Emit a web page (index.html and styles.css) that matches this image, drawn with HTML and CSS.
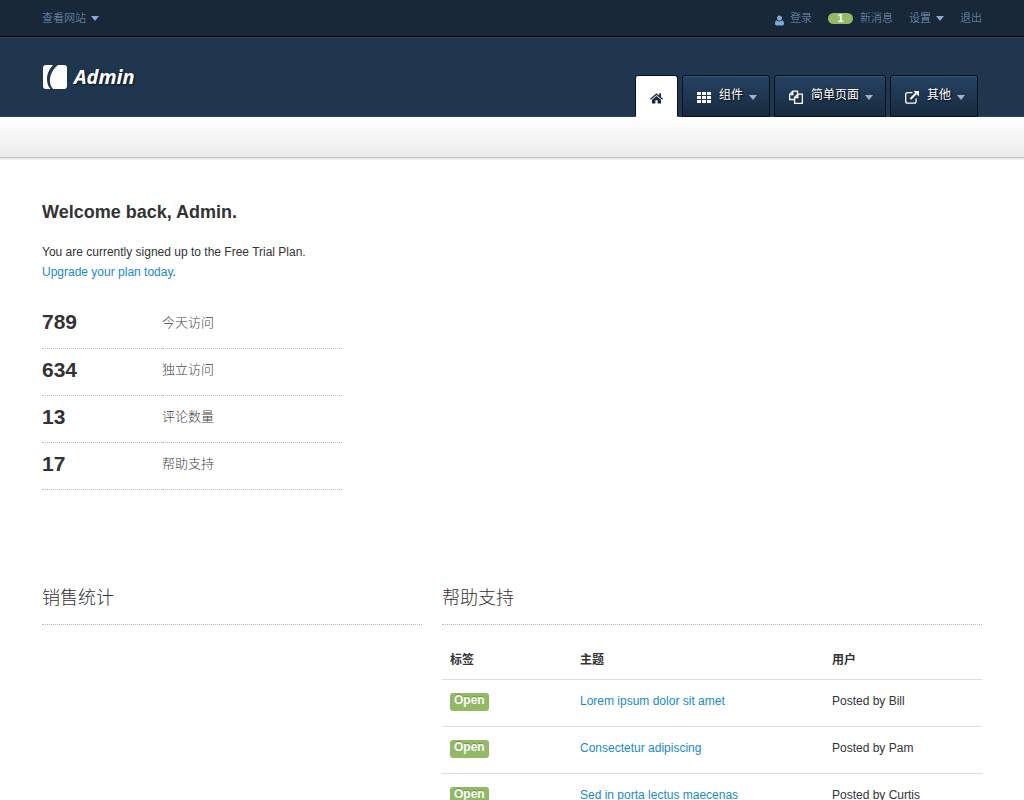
FILE: index.html
```html
<!DOCTYPE html>
<html lang="zh-CN">
<head>
<meta charset="utf-8">
<title>Admin</title>
<link rel="stylesheet" href="styles.css">
</head>
<body>
<div class="topbar">
  <div class="container topbar-inner">
    <a class="top-link" href="#">查看网站<span class="caret"></span></a>
    <nav class="top-nav">
      <a class="top-link" href="#"><svg class="user-icon" viewBox="0 0 9 11" width="9" height="11"><path d="M4.500 0.500C6 .5 7 1.600 7 3S6 5.700 4.500 5.700 2 4.400 2 3 3 .5 4.500.5zM1.700 5.300C2.400 6.200 3.300 6.400 4.500 6.400S6.600 6.200 7.300 5.300C8.500 5.800 9 7 9 8.600 9 9.700 8.500 10.500 7.500 10.500H1.500C.5 10.500 0 9.700 0 8.600 0 7 .5 5.800 1.700 5.300z"/></svg>登录</a>
      <a class="top-link" href="#"><span class="count">1</span>新消息</a>
      <a class="top-link" href="#">设置<span class="caret"></span></a>
      <a class="top-link" href="#">退出</a>
    </nav>
  </div>
</div>
<header class="header">
  <div class="container header-inner">
    <a class="brand" href="#"><svg viewBox="0 0 24 24" width="24" height="24"><path d="M3 0H10C5.500 5 3.500 10 4 15 4.300 19 5.500 22 7.500 24H3Q0 24 0 21V3Q0 0 3 0z"/><path d="M15 0H21Q24 0 24 3V21Q24 24 21 24H10C7.500 21 6.500 18 7 14 7.500 9 10 4 15 0z"/></svg>Admin</a>
    <nav class="tabs">
      <a class="tab tab-active" href="#" aria-label="首页"><svg class="home-icon" viewBox="0 0 13 12" width="13" height="12"><path d="M6.500 1.200 0 6.800.8 7.800 6.500 3 12.200 7.800 13 6.800 11 5.100V1.200H9.200V3.500z"/><path d="M6.500 4 2 7.800V11.500H5.400V8.300H7.600V11.500H11V7.800z"/></svg></a>
      <a class="tab" href="#"><svg class="tab-icon" viewBox="0 0 14 14" width="14" height="14"><path d="M0 2h4v3H0zM5 2h4v3H5zM10 2h4v3h-4zM0 6h4v3H0zM5 6h4v3H5zM10 6h4v3h-4zM0 10h4v3H0zM5 10h4v3H5zM10 10h4v3h-4z"/></svg>组件<span class="caret"></span></a>
      <a class="tab" href="#"><svg class="tab-icon line-icon" viewBox="0 0 14 14" width="14" height="14"><path d="M5 9.500H.6V4.500L3.800 1.100H8.500V4M3.800 1.200V4.500H.7M5.600 7.500 8.800 4.100H13.400V13.400H5.600zM8.800 4.200V7.500H5.700"/></svg>简单页面<span class="caret"></span></a>
      <a class="tab" href="#"><svg class="tab-icon line-icon" viewBox="0 0 14 14" width="14" height="14"><path d="M7.500 2.700H2.600Q.7 2.700.7 4.600V11.200Q.7 13.100 2.600 13.100H9.200Q11.100 13.100 11.100 11.200V8.500"/><path class="arrow-line" d="M5.500 9 11 3.500"/><path class="arrow-head" d="M8.500 1H14V6.500z"/></svg>其他<span class="caret"></span></a>
    </nav>
  </div>
</header>
<div class="subbar"></div>
<main class="container">
  <section class="welcome">
    <h1>Welcome back, Admin.</h1>
    <p>You are currently signed up to the Free Trial Plan.<br><a href="#">Upgrade your plan today</a>.</p>
    <table class="stats">
      <tbody>
        <tr><th scope="row">789</th><td>今天访问</td></tr>
        <tr><th scope="row">634</th><td>独立访问</td></tr>
        <tr><th scope="row">13</th><td>评论数量</td></tr>
        <tr><th scope="row">17</th><td>帮助支持</td></tr>
      </tbody>
    </table>
  </section>
  <div class="columns">
    <section><h2>销售统计</h2></section>
    <section>
      <h2>帮助支持</h2>
      <table class="tickets">
        <thead><tr><th class="col-label">标签</th><th class="col-subject">主题</th><th>用户</th></tr></thead>
        <tbody>
          <tr><td><span class="label">Open</span></td><td><a href="#">Lorem ipsum dolor sit amet</a></td><td>Posted by Bill</td></tr>
          <tr><td><span class="label">Open</span></td><td><a href="#">Consectetur adipiscing</a></td><td>Posted by Pam</td></tr>
          <tr><td><span class="label">Open</span></td><td><a href="#">Sed in porta lectus maecenas</a></td><td>Posted by Curtis</td></tr>
        </tbody>
      </table>
    </section>
  </div>
</main>
</body>
</html>
```
FILE: styles.css
```css
* { box-sizing: border-box; }
body {
  margin: 0;
  background: #fff;
  color: #333;
  font: 12px/20px "Liberation Sans", "Noto Sans CJK SC", sans-serif;
}
a { color: #178acb; text-decoration: none; }
.container { max-width: 940px; margin: 0 auto; }

.topbar { height: 37px; background: #182839; border-bottom: 1px solid #000; }
.topbar-inner { display: flex; justify-content: space-between; padding-top: 8px; }
.top-nav { display: flex; gap: 16px; }
.top-link { display: flex; align-items: center; color: #7899be; font-size: 11px; font-weight: 300; }
.caret {
  margin-left: 5px;
  border: 4px solid transparent;
  border-top: 5px solid #80aad8;
  border-bottom: 0;
}
.user-icon { fill: #80aad8; margin: 4px 6px 0 0; }
.count {
  width: 25px;
  height: 11px;
  margin-right: 7px;
  border-radius: 6px;
  background: #92b964;
  color: #fff;
  font-weight: 700;
  line-height: 11px;
  text-align: center;
}

.header { height: 80px; background: #1f364e; border-top: 1px solid #34485f; }
.header-inner { display: flex; justify-content: space-between; height: 100%; }
.brand {
  display: flex;
  align-items: center;
  align-self: center;
  gap: 7px;
  padding: 0 0 2px 1px;
  color: #fff;
  font: italic 700 20px/28px "Open Sans", sans-serif;
  text-shadow: 1px 1px 2px #0c1722;
}
.brand svg { fill: #fff; }
.tabs { display: flex; align-items: flex-end; gap: 4px; padding-right: 4px; }
.tab {
  display: flex;
  align-items: center;
  height: 42px;
  padding: 0 12px 2px 14px;
  border: 1px solid #07121d;
  border-radius: 3px 3px 0 0;
  background: linear-gradient(#254262, #182b3f);
  box-shadow: inset 0 1px #305477;
  color: #fff;
  font-size: 12px;
  text-shadow: 1px 1px 2px #000;
}
.tab-active { background: #fff; border-bottom-color: #fff; box-shadow: none; padding: 0 14px; }
.tab .caret { border-top-color: #a3b3c6; margin: 4px 0 0 6px; }
.tab-icon { margin: 4px 8px 0 0; fill: #fff; }
.line-icon { fill: none; stroke: #fff; stroke-width: 1.3; }
.arrow-line { stroke-width: 2; }
.arrow-head { fill: #fff; stroke: none; }
.home-icon { fill: #182b3f; margin-top: 3px; }

.subbar {
  height: 41px;
  border-bottom: 1px solid #c3c3c3;
  background: linear-gradient(#fff, #ebebeb);
  box-shadow: 0 1px 2px #ddd;
}

.welcome { padding-top: 42px; }
h1 { margin: 0; font-size: 18px; line-height: 24px; }
p { margin: 18px 0 19px; }
table { border-collapse: collapse; table-layout: fixed; }
th { text-align: left; }
.stats { width: 300px; }
.stats th, .stats td { height: 47px; padding: 0 0 4px; border-bottom: 1px dotted #bbb; }
.stats th { width: 120px; font-size: 21px; }
.stats td { padding-bottom: 3px; color: #444; font-size: 13px; font-weight: 300; }

.columns { display: grid; grid-template-columns: 380fr 540fr; gap: 20px; padding-top: 94px; }
h2 {
  margin: 0 0 20px;
  padding-bottom: 12px;
  border-bottom: 1px dotted #bbb;
  font-size: 18px;
  font-weight: 300;
  line-height: 28px;
}
.tickets { width: 100%; }
.tickets th { height: 35px; padding: 0 8px 4px; }
.tickets td { height: 47px; padding: 0 8px 4px; border-top: 1px solid #ddd; }
.col-label { width: 130px; }
.col-subject { width: 252px; }
.label {
  display: inline-block;
  padding: 0 4px 3px;
  border-radius: 3px;
  background: #92b964;
  color: #fff;
  font-weight: 700;
  line-height: 15px;
  text-shadow: 0 -1px rgba(0, 0, 0, 0.25);
  vertical-align: middle;
}
```
